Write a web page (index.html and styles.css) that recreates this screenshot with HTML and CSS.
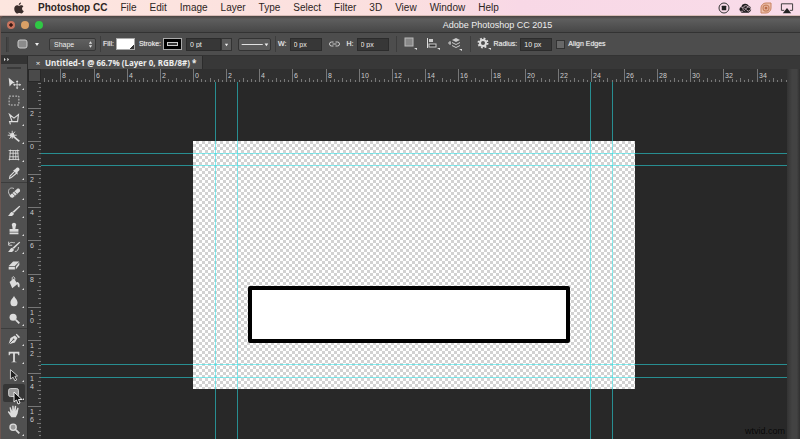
FILE: index.html
```html
<!DOCTYPE html>
<html lang="en">
<head>
<meta charset="utf-8">
<title>Adobe Photoshop CC 2015</title>
<link rel="stylesheet" href="styles.css">
</head>
<body>
<header class="menubar">
  <svg class="apple" viewBox="0 0 20 24"><path d="M14 1c0 3-2 5-4.500 5C9.500 3 11.500 1.500 14 1zM10 7.500c1.500 0 2.500-1.200 4.500-1.200 1.800 0 3.500 1 4.300 2.500-4 2.400-3.200 7.600.8 9.200-1.200 3-3 5-4.600 5-1.600 0-2.200-1-4.300-1s-2.800 1-4.300 1C3.500 23 .5 18 .5 13.500s2.800-7.200 5.500-7.200c1.800 0 3 1.200 4 1.200z"/></svg>
  <nav class="menus">
    <a class="app" href="#">Photoshop CC</a><a href="#">File</a><a href="#">Edit</a><a href="#">Image</a><a href="#">Layer</a><a href="#">Type</a><a href="#">Select</a><a href="#">Filter</a><a href="#">3D</a><a href="#">View</a><a href="#">Window</a><a href="#">Help</a>
  </nav>
  <div class="status">
    <svg viewBox="0 0 24 24"><circle cx="12" cy="12" r="10" fill="none" stroke="#333" stroke-width="2"/><rect x="7.500" y="7.500" width="9" height="9" rx="1" fill="#222"/></svg>
    <svg class="wide" viewBox="0 0 30 24"><path d="M8 22a7 7 0 0 1-1-13A9 9 0 0 1 23 7a8 8 0 0 1 0 15z" fill="#1d1a1c"/><g fill="none" stroke="#f8dbe8" stroke-width="1.500"><path d="M15 19l-4-4a5 5 0 1 0-3 4h3"/><path d="M11 11a6 6 0 0 1 10-2l1 2"/><path d="M13 11l6 6a4.500 4.500 0 1 0 0-6l-3 4"/></g></svg>
    <svg viewBox="0 0 24 24"><path d="M12 2h10v10a10 10 0 0 1-10 10H2V12A10 10 0 0 1 12 2z" fill="#edc0ac" stroke="#c88360" stroke-width="2"/><circle cx="12" cy="12" r="6" fill="none" stroke="#c88360" stroke-width="2.500"/><circle cx="12" cy="12" r="3" fill="#b96b49"/></svg>
    <svg class="wide" viewBox="0 0 30 24"><path d="M9 17H3V3h24v14h-6" fill="none" stroke="#333" stroke-width="2"/><path d="M15 12l9 11H6z" fill="#222"/></svg>
  </div>
</header>

<main class="window">
  <div class="titlebar">
    <div class="lights"><button class="close" aria-label="Close"></button><button class="min" aria-label="Minimize"></button><button class="zoom" aria-label="Zoom"></button></div>
    <h1>Adobe Photoshop CC 2015</h1>
  </div>

  <form class="options">
    <i class="grip"></i>
    <button type="button" class="preset" aria-label="Tool preset"><svg viewBox="0 0 24 10"><rect x="1" y="1" width="9" height="8" rx="2" fill="#8b8b8b" stroke="#ccc"/><path d="M18 4h4l-2 3z" fill="#eee"/></svg></button>
    <span class="picker mode"><select aria-label="Tool mode"><option>Shape</option></select><svg viewBox="0 0 6 10"><path d="M1 4l2-3 2 3zM1 6l2 3 2-3z" fill="#ddd"/></svg></span>
    <i class="rule"></i>
    <label for="fill">Fill:</label><button type="button" id="fill" class="swatch fill"></button>
    <label for="stroke">Stroke:</label><button type="button" id="stroke" class="swatch stroke"><span></span></button>
    <span class="combo"><input aria-label="Stroke width" value="0 pt"><button type="button" aria-label="Stroke width list"><svg viewBox="0 0 6 6"><path d="M1 2h4L3 5z" fill="#eee"/></svg></button></span>
    <button type="button" class="linetype" aria-label="Stroke type"><svg viewBox="0 0 32 12"><path d="M2 6h23" stroke="#eee"/><path d="M27 5h4l-2 3z" fill="#eee"/></svg></button>
    <i class="rule"></i>
    <label for="w">W:</label><input id="w" value="0 px">
    <button type="button" class="link" aria-label="Link size"><svg viewBox="0 0 22 12"><g fill="none" stroke="#ccc" stroke-width="2"><path d="M9 2H5a4 4 0 0 0 0 8h4M13 2h4a4 4 0 0 1 0 8h-4M7 6h8"/></g></svg></button>
    <label for="h">H:</label><input id="h" value="0 px">
    <i class="rule"></i>
    <div class="arrange">
      <button type="button" aria-label="Path operations"><svg viewBox="0 0 14 14"><rect x="1" y="1" width="8" height="8" fill="#888" stroke="#bbb"/><path d="M10 11h3v2z" fill="#ddd"/></svg></button>
      <button type="button" aria-label="Path alignment"><svg viewBox="0 0 14 14"><path d="M1.500 1v10" stroke="#ddd"/><rect x="3" y="2" width="4" height="3" fill="#ccc"/><rect x="3" y="7" width="7" height="3" fill="#333" stroke="#ccc"/><path d="M11 11h3v2z" fill="#ddd"/></svg></button>
      <button type="button" aria-label="Path arrangement"><svg viewBox="0 0 14 14"><path d="M0 6h3M2 4v4" stroke="#ccc"/><path d="M8 1l4 2-4 2-4-2zM4 5l4 2 4-2v1L8 8 4 6zM4 8l4 2 4-2v1l-4 2-4-2z" fill="#ccc"/><path d="M11 12h3v2z" fill="#ddd"/></svg></button>
    </div>
    <i class="rule"></i>
    <button type="button" class="gear" aria-label="Geometry options"><svg viewBox="0 0 14 14"><circle cx="6" cy="6" r="3" fill="none" stroke="#ddd" stroke-width="2"/><circle cx="6" cy="6" r="4.500" fill="none" stroke="#ddd" stroke-width="2" stroke-dasharray="1.800 1.734"/><path d="M11 11h3v2z" fill="#ddd"/></svg></button>
    <label for="radius">Radius:</label><input id="radius" value="10 px">
    <input type="checkbox" id="edges"><label for="edges">Align Edges</label>
  </form>

  <div class="body">
    <aside class="tools">
      <div class="collapse"><svg viewBox="0 0 8 6"><path d="M1 1l2 2-2 2zM5 1l2 2-2 2z" fill="#ddd"/></svg></div>
      <i class="handle"></i>
      <div class="group">
        <button aria-label="Move"><svg viewBox="0 0 18 18"><path d="M3 3l7 6-3 .5L4 13z"/><path d="M12.500 7v8M8.500 11h8" fill="none" stroke="#ddd"/><path d="M11 8l1.500-2L14 8zM11 14l1.500 2 1.500-2zM15 9.500l2 1.500-2 1.500zM10 9.500L8 11l2 1.500z"/></svg></button>
        <button aria-label="Marquee"><svg viewBox="0 0 18 18"><rect x="3.500" y="3.500" width="11" height="10" fill="none" stroke="#ddd" stroke-dasharray="2 1.500"/></svg></button>
        <button aria-label="Lasso"><svg viewBox="0 0 18 18"><path d="M4 4l5 4 5-4-1 8H7L4 4zM7 12l-3 0 1 3" fill="none" stroke="#ddd" stroke-width="1.300"/></svg></button>
        <button aria-label="Magic wand"><svg viewBox="0 0 18 18"><path d="M8 8l7 6" stroke="#ddd" stroke-width="2"/><path d="M7 2v9M3 4l8 6M2 7h10M4 11l6-8" stroke="#ddd"/><circle cx="7" cy="7" r="2.500"/></svg></button>
        <button aria-label="Perspective crop"><svg viewBox="0 0 18 18"><path d="M5 3L4 15M13 3l1 12M3 4h12M3 14h12M8 4v10M11 4v10M4 7h10M4 11h10" fill="none" stroke="#ddd"/></svg></button>
        <button aria-label="Eyedropper"><svg viewBox="0 0 18 18"><path d="M10 7L4.500 12.500 4 15l2-1 6-5" fill="none" stroke="#ddd" stroke-width="1.200"/><path d="M8 6l2-1 2-2c2-1 4 1 3 3l-2 2v3z"/></svg></button>
      </div>
      <div class="group">
        <button aria-label="Healing brush"><svg viewBox="0 0 18 18"><path d="M5 11L13 4c2-1 4 2 2 4l-7 6c-2 1-5-1-3-3z"/><path d="M9 7l4 4M7 9l4 4" stroke="#666"/><path d="M9 4C5 2 2 5 3 9l2 4" fill="none" stroke="#ccc"/></svg></button>
        <button aria-label="Brush"><svg viewBox="0 0 18 18"><path d="M15 3l1 1-7 7-2-1z"/><path d="M7 10l2 2c-1 3-4 3-7 2 3-1 2-4 5-4z"/></svg></button>
        <button aria-label="Clone stamp"><svg viewBox="0 0 18 18"><path d="M7 6a2.500 2.500 0 1 1 4 0l-.5 3H14v3H4V9h3.500zM4 13h10v2H4z"/></svg></button>
        <button aria-label="History brush"><svg viewBox="0 0 18 18"><path d="M15 3l1 1-7 7-2-1zM7 10l2 2c-1 3-4 3-7 2 3-1 2-4 5-4z"/><path d="M3 6c3-4 5-1 7-2M3 3v4h4M10 14c3 0 4-2 4-5" fill="none" stroke="#ddd"/></svg></button>
        <button aria-label="Eraser"><svg viewBox="0 0 18 18"><path d="M3 10l5-5h7l-5 5zM3 11h7v3H3zM11 11l4-5v3l-4 5z"/></svg></button>
        <button aria-label="Paint bucket"><svg viewBox="0 0 18 18"><path d="M4 8l5-4 4 6-6 5zM12 8c3 0 4 3 3 6-1 0-2-1-2-3z"/><path d="M7 8V3c1-2 3-1 3 2" fill="none" stroke="#ddd"/></svg></button>
        <button aria-label="Blur"><svg viewBox="0 0 18 18"><path d="M9 3c1 3 4 4 4 8a4 4 0 0 1-8 0c0-4 3-5 4-8z"/></svg></button>
        <button aria-label="Dodge"><svg viewBox="0 0 18 18"><circle cx="8" cy="7" r="4"/><path d="M11 10l4 4" stroke="#ddd" stroke-width="2"/></svg></button>
      </div>
      <div class="group">
        <button aria-label="Pen"><svg viewBox="0 0 18 18"><path d="M3 15l2-7 5-3 3 3-3 5zM11 4l1-1 4 4-2 1z"/><path d="M3 15l5-5" stroke="#555"/><circle cx="8.500" cy="9.500" r="1" fill="#555"/></svg></button>
        <button aria-label="Type"><svg viewBox="0 0 18 18"><path d="M3 3h12v4h-1l-1-2h-3v9l2 .5v.5H6v-.5l2-.5V5H5L4 7H3z"/></svg></button>
        <button aria-label="Path selection"><svg viewBox="0 0 18 18"><path d="M5 3l8 7-3 .5 2 4-2 1-2-4-3 2z" fill="#222" stroke="#ddd"/></svg></button>
        <button class="active" aria-label="Rounded rectangle"><svg viewBox="0 0 18 18"><rect x="3" y="4" width="11" height="9" rx="2" fill="#999" stroke="#ddd"/></svg></button>
        <button aria-label="Hand"><svg viewBox="0 0 18 18"><path d="M6 16L2 10l1-1 2 2-1-6 1-.5L7 9V3h1.500L9 8l1-5 1.500.5L11 9l2-4 1.200.6L13 12l-2 4z"/></svg></button>
        <button aria-label="Zoom"><svg viewBox="0 0 18 18"><circle cx="8" cy="7" r="3.500" fill="#999" stroke="#ddd" stroke-width="1.500"/><path d="M11 10l4 4" stroke="#ddd" stroke-width="2"/></svg></button>
      </div>
      <svg class="cursor" viewBox="0 0 10 14"><path d="M1 1v10l2.500-2 1.500 4 2-1-1.500-3.500H9z" fill="#111" stroke="#eee"/></svg>
    </aside>

    <section class="document">
      <div class="tabs"><div class="tab"><button aria-label="Close document">×</button><span>Untitled-1 @ 66.7% (Layer 0, RGB/8#) *</span></div></div>
      <div class="view">
        <i class="corner"></i>
        <svg class="ruler" id="ruler-x"></svg>
        <i class="scroll"></i>
        <svg class="ruler" id="ruler-y"></svg>
        <div class="stage">
          <div class="artboard"></div>
          <i class="guide v v1"></i><i class="guide v v2"></i><i class="guide v v3"></i><i class="guide v v4"></i>
          <i class="guide h h1"></i><i class="guide h h2"></i><i class="guide h h3"></i><i class="guide h h4"></i>
          <div class="box"></div>
          <span class="credit">wtvid.com</span>
        </div>
      </div>
    </section>
  </div>
</main>
<script src="rulers.js"></script>
</body>
</html>
```
FILE: styles.css
```css
* { box-sizing: border-box; }
html, body { height: 100%; }
body {
  margin: 0;
  display: flex;
  flex-direction: column;
  overflow: hidden;
  background: #6b5550;
  font-family: "Liberation Sans", Arial, sans-serif;
  font-size: 7px;
  color: #eee;
}
svg { display: block; }
i { display: block; }
button, input, select { font: inherit; color: inherit; margin: 0; padding: 0; border: 0; background: none; border-radius: 0; }
button svg { width: 100%; height: 100%; }

.menubar {
  flex: none;
  height: 16px;
  padding: 0 6px 0 14px;
  display: flex;
  align-items: center;
  background: linear-gradient(90deg, #fde6df, #fbdfdf 50%, #f8d8e6 65%, #f9dce9);
  border-bottom: 1px solid #d9bdb8;
}
.apple { width: 10px; height: 12px; margin-right: 14px; fill: #3a2d2b; }
.menus { display: flex; gap: 13px; font-size: 10px; line-height: 15px; }
.menus a { color: #2c2422; text-decoration: none; white-space: nowrap; }
.menus .app { font-weight: bold; }
.status { display: flex; gap: 8px; margin-left: auto; }
.status svg { width: 12px; height: 12px; }
.status .wide { width: 14px; }

.window { flex: 1; min-height: 0; margin-left: 1px; display: flex; flex-direction: column; background: #383838; border-radius: 4px 0 0 0; overflow: hidden; }
.titlebar {
  flex: none;
  height: 17px;
  padding-top: 2px;
  display: flex;
  align-items: center;
  background: linear-gradient(#4a4442, #5e5e5e 20%, #474747);
  border-bottom: 1px solid #333;
}
.lights { display: flex; gap: 6px; width: 194px; padding-left: 6px; }
.lights button { width: 8px; height: 8px; border-radius: 50%; }
.close { background: radial-gradient(circle, #391611 25%, #c8735d 35%); }
.min { background: #d9a066; }
.zoom { background: #2fc844; }
h1 { flex: 1; margin: 0; text-align: center; font-size: 9px; font-weight: normal; line-height: 14px; }

.options {
  flex: none;
  height: 23px;
  padding-left: 5px;
  display: flex;
  align-items: center;
  background: #4d4d4d;
  border-bottom: 1px solid #333;
  white-space: nowrap;
  line-height: 12px;
}
.options label { text-shadow: 0 0 1px #aaa; }
.options input { width: 32px; height: 13px; padding-left: 3px; background: #373737; border: 1px solid #2c2c2c; }
.grip { width: 3px; height: 15px; background: #444; border-left: 1px solid #3a3a3a; margin-right: 8px; }
.preset { width: 24px; height: 10px; }
.picker { position: relative; width: 47px; height: 13px; margin: 0 4px 0 8px; }
.picker select { width: 100%; height: 100%; padding-left: 4px; appearance: none; border: 1px solid #363636; border-radius: 2px; background: linear-gradient(#606060, #505050); }
.picker svg { position: absolute; right: 3px; top: 2px; width: 5px; height: 9px; }
.rule { width: 1px; height: 16px; background: #3d3d3d; margin-right: 2px; }
.swatch { width: 19px; height: 12px; margin: 0 4px 0 2px; border: 1px solid #aaa; }
.fill { background: linear-gradient(135deg, #fff 82%, #333 83%); }
.stroke { background: #000; padding: 3px; }
.stroke span { display: block; height: 4px; border: 1px solid #ccc; background: #333; }
.combo { display: flex; width: 46px; margin-right: 6px; }
.combo input { flex: 1; min-width: 0; }
.combo button { width: 11px; height: 13px; padding: 3px 2px; background: #5a5a5a; border: 1px solid #333; }
.linetype { width: 33px; height: 13px; margin-right: 4px; background: #5a5a5a; border: 1px solid #333; border-radius: 2px; }
#w, #h, #radius { margin-left: 3px; }
.link { width: 11px; height: 6px; margin: 0 7px; }
#h + .rule { margin: 0 7px; }
.arrange { display: flex; gap: 8px; margin-right: 8px; }
.arrange button { width: 14px; height: 14px; }
.arrange + .rule { margin-right: 6px; }
.gear { width: 14px; height: 14px; margin-right: 3px; }
.options input[type="checkbox"] { appearance: none; width: 9px; height: 9px; margin: 0 3px 0 4px; padding: 0; background: #686868; border: 1px solid #333; }

.body { flex: 1; min-height: 0; display: flex; }
.tools { position: relative; flex: none; width: 26px; background: #505050; overflow: hidden; }
.collapse { height: 8px; padding: 1px 2px; background: #343434; }
.collapse svg { width: 7px; height: 5px; }
.handle { width: 14px; height: 2px; margin: 3px 6px 5px; background: #3a3a3a; }
.group { display: flex; flex-direction: column; }
.group + .group { border-top: 1px solid #3c3c3c; padding-top: 1px; }
.group button { position: relative; height: 18px; margin: 0 2px; padding: 1px 3px; }
.group button svg { width: 16px; height: 16px; fill: #ddd; }
.group button::after { content: ""; position: absolute; right: 1px; bottom: 2px; border: 1px solid; border-color: transparent #ddd #ddd transparent; }
.group .active { background: #363636; border-radius: 2px; }
.cursor { position: absolute; left: 12px; top: 335px; width: 10px; height: 14px; }

.document { flex: 1; min-width: 0; display: flex; flex-direction: column; border-left: 1px solid #2b2b2b; }
.tabs { flex: none; height: 13px; display: flex; }
.tab { display: flex; align-items: center; gap: 4px; padding: 0 6px 0 7px; background: #4d4d4d; border-right: 1px solid #2c2c2c; font: bold 8px/13px "Open Sans", sans-serif; white-space: nowrap; }
.tab button { font-weight: normal; line-height: 8px; width: 6px; }
.view { flex: 1; min-height: 0; display: grid; grid-template-columns: 13px 1fr 13px; grid-template-rows: 13px 1fr; background: #282828; }
.corner { background: #4a4a4a; margin: 1px; }
.ruler { width: 100%; height: 100%; overflow: hidden; background: #303030; font-size: 7px; fill: #ccc; stroke: none; }
.ruler path { stroke: #777; fill: none; shape-rendering: crispEdges; }
.scroll { grid-column: 3; grid-row: 1 / 3; background: linear-gradient(90deg, #333, #434343 40%, #434343 75%, #303030); }
#ruler-y { grid-column: 1; grid-row: 2; }
.stage { position: relative; overflow: hidden; background: #282828; }
.artboard { position: absolute; left: 152px; top: 59px; width: 442px; height: 248px; background: repeating-conic-gradient(#d2d2d2 0 25%, #fff 0 50%) 0 0 / 6px 6px; }
.box { position: absolute; left: 207px; top: 204px; width: 322px; height: 57px; border: 4px solid #000; border-radius: 2px; background: #fff; }
.guide { position: absolute; background: rgba(40, 225, 232, .55); }
.v { top: 0; bottom: 0; width: 1px; }
.h { left: 0; right: 0; height: 1px; }
.v1 { left: 174px; } .v2 { left: 196px; } .v3 { left: 549px; } .v4 { left: 571px; }
.h1 { top: 71px; } .h2 { top: 83px; } .h3 { top: 282px; } .h4 { top: 295px; }
.credit { position: absolute; right: 2px; bottom: 2px; font-size: 9px; line-height: 11px; color: #090909; }
```
FILE: rulers.js
```js
// Draws both rulers; a labelled division is two units long.
const NS = 'http://www.w3.org/2000/svg';
const DIVISION = 33.15;

function drawRuler(id, origin, first, last, vertical) {
  const svg = document.getElementById(id);
  let d = '';
  for (let n = (first - 1) * 8; n < (last + 1) * 8; n++) {
    const p = Math.round(origin + n * DIVISION / 8) + 0.5;
    const len = n % 8 === 0 ? 13 : n % 4 === 0 ? 4 : n % 2 === 0 ? 3 : 2;
    d += vertical ? `M${13 - len} ${p}H13` : `M${p} ${13 - len}V13`;
  }
  const path = document.createElementNS(NS, 'path');
  path.setAttribute('d', d);
  svg.append(path);

  for (let k = first; k <= last; k++) {
    const p = Math.round(origin + k * DIVISION);
    const label = String(Math.abs(k * 2));
    const parts = vertical ? [...label] : [label];
    parts.forEach((part, i) => {
      const t = document.createElementNS(NS, 'text');
      t.setAttribute('x', vertical ? 2 : p + 2);
      t.setAttribute('y', vertical ? p + 8 + i * 8 : 9);
      t.textContent = part;
      svg.append(t);
    });
  }
}

drawRuler('ruler-x', 152, -4, 17, false);
drawRuler('ruler-y', 59, -1, 8, true);
```
